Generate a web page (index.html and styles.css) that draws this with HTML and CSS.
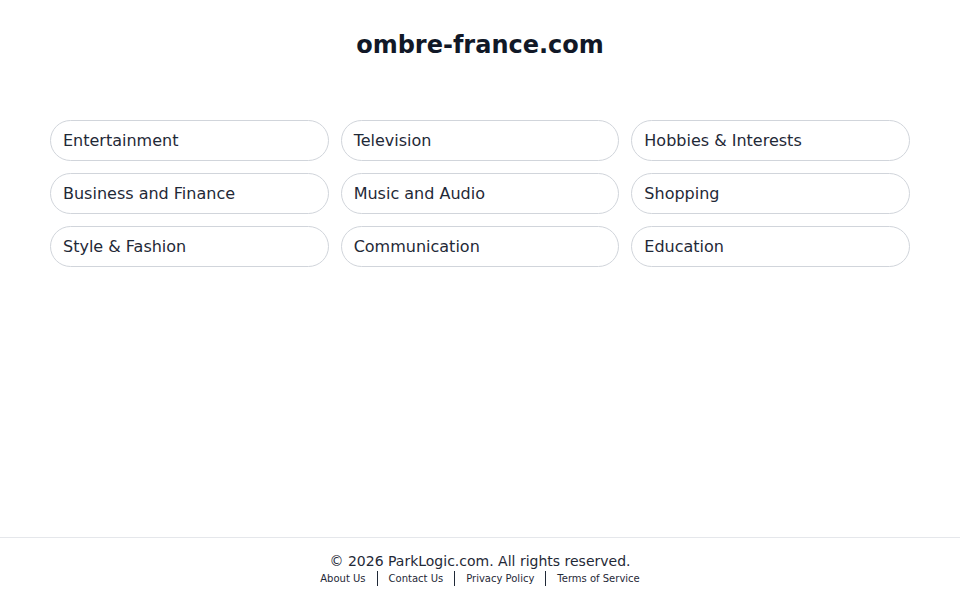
FILE: index.html
```html
<!DOCTYPE html>
<html lang="en">
<head>
    <meta charset="UTF-8">
    <title>ombre-france.com</title>
    <link rel="stylesheet" href="styles.css">
</head>
<body>
<div class="page">
    <div class="header">
        <h1>ombre-france.com</h1>
    </div>
    <ul class="links">
        <li><a href="#">Entertainment</a></li>
        <li><a href="#">Television</a></li>
        <li><a href="#">Hobbies &amp; Interests</a></li>
        <li><a href="#">Business and Finance</a></li>
        <li><a href="#">Music and Audio</a></li>
        <li><a href="#">Shopping</a></li>
        <li><a href="#">Style &amp; Fashion</a></li>
        <li><a href="#">Communication</a></li>
        <li><a href="#">Education</a></li>
    </ul>
    <div class="footer">
        <p class="copy">&copy; 2026 ParkLogic.com. All rights reserved.</p>
        <p class="nav">
            <a href="#">About Us</a><a href="#">Contact Us</a><a href="#">Privacy Policy</a><a href="#">Terms of Service</a>
        </p>
    </div>
</div>
</body>
</html>
```

FILE: styles.css
```css
html, body {
    margin: 0;
    padding: 0;
    background: #fff;
}
body {
    font-family: "DejaVu Sans", sans-serif;
    color: #1f2937;
}
.page {
    min-height: 100vh;
    display: flex;
    flex-direction: column;
}
.header {
    text-align: center;
    padding-top: 31px;
}
.header h1 {
    margin: 0;
    font-size: 24px;
    line-height: 28px;
    font-weight: bold;
    color: #111827;
}
.links {
    list-style: none;
    margin: 61px auto 0;
    padding: 0;
    width: 860px;
    display: grid;
    grid-template-columns: repeat(3, 1fr);
    gap: 12px;
}
.links li a {
    display: block;
    height: 39px;
    line-height: 39px;
    padding: 0 12px;
    border: 1px solid #d1d5db;
    border-radius: 999px;
    font-size: 16px;
    color: #1f2937;
    text-decoration: none;
}
.footer {
    margin-top: auto;
    border-top: 1px solid #e5e7eb;
    text-align: center;
    padding: 14px 0 14px;
}
.copy {
    margin: 0;
    font-size: 14px;
    line-height: 18px;
    color: #1f2937;
}
.nav {
    margin: 1px 0 0;
    font-size: 10px;
    line-height: 15px;
}
.nav a {
    display: inline-block;
    padding: 0 11px;
    color: #1f2937;
    text-decoration: none;
}
.nav a + a {
    border-left: 1px solid #1f2937;
}
```
